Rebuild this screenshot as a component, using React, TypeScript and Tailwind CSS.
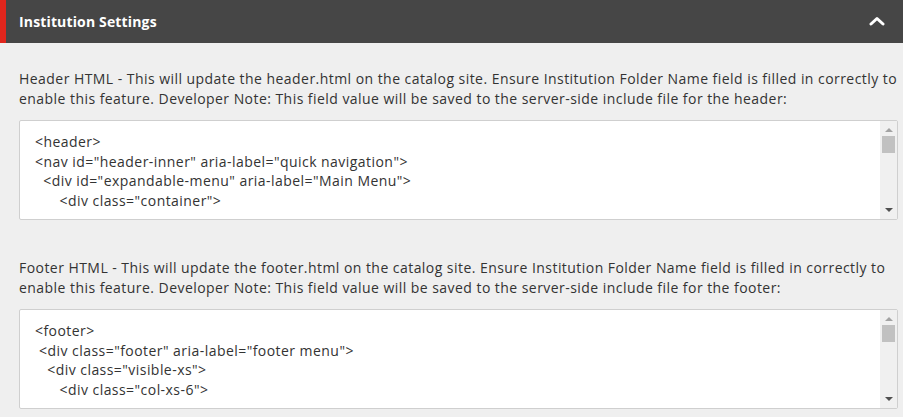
import React from "react";

const headerCode = `<header>
<nav id="header-inner" aria-label="quick navigation">
  <div id="expandable-menu" aria-label="Main Menu">
      <div class="container">`;

const footerCode = `<footer>
 <div class="footer" aria-label="footer menu">
   <div class="visible-xs">
      <div class="col-xs-6">`;

function FakeScrollbar() {
  return (
    <div className="flex w-[17px] shrink-0 flex-col items-center bg-[#f0f0f0]">
      <div className="mt-[7px] h-0 w-0 border-x-[4px] border-b-[4px] border-x-transparent border-b-[#a3a3a3]" />
      <div className="mt-[4px] h-[17px] w-[13px] bg-[#c1c1c1]" />
      <div className="flex-1" />
      <div className="mb-[7px] h-0 w-0 border-x-[4px] border-t-[4px] border-x-transparent border-t-[#505050]" />
    </div>
  );
}

function HtmlField({ label, code, last }: { label: string; code: string; last?: boolean }) {
  return (
    <div className={last ? "" : "mb-[38px]"}>
      <p className="mb-[11px] text-[14px] leading-[20px] tracking-[0.45px] text-[#333]">{label}</p>
      <div className="flex h-[100px] overflow-hidden rounded-[2px] border border-[#cfcfcf] bg-white">
        <pre className="flex-1 overflow-hidden whitespace-pre px-[15px] pt-[11px] font-['Open_Sans',sans-serif] text-[14px] leading-[19.7px] tracking-[0.45px] text-[#333]">
          {code}
        </pre>
        <FakeScrollbar />
      </div>
    </div>
  );
}

export default function App() {
  return (
    <div className="min-h-[417px] w-full bg-[#efefef] font-['Open_Sans',sans-serif]">
      <div className="flex h-[43px] items-center border-l-[6px] border-[#e0261d] bg-[#464646] pl-[13px] pr-[18px]">
        <h2 className="flex-1 text-[14px] font-bold tracking-[0.15px] text-white">Institution Settings</h2>
        <svg width="16" height="10" viewBox="0 0 16 10" className="mt-[-1px]">
          <path d="M2 8 L8 2.5 L14 8" fill="none" stroke="white" strokeWidth="3" strokeLinecap="round" strokeLinejoin="round" />
        </svg>
      </div>
      <div className="pl-[19px] pr-[5px] pt-[26px]">
        <HtmlField
          label="Header HTML - This will update the header.html on the catalog site. Ensure Institution Folder Name field is filled in correctly to enable this feature. Developer Note: This field value will be saved to the server-side include file for the header:"
          code={headerCode}
        />
        <HtmlField
          last
          label="Footer HTML - This will update the footer.html on the catalog site. Ensure Institution Folder Name field is filled in correctly to enable this feature. Developer Note: This field value will be saved to the server-side include file for the footer:"
          code={footerCode}
        />
      </div>
    </div>
  );
}
